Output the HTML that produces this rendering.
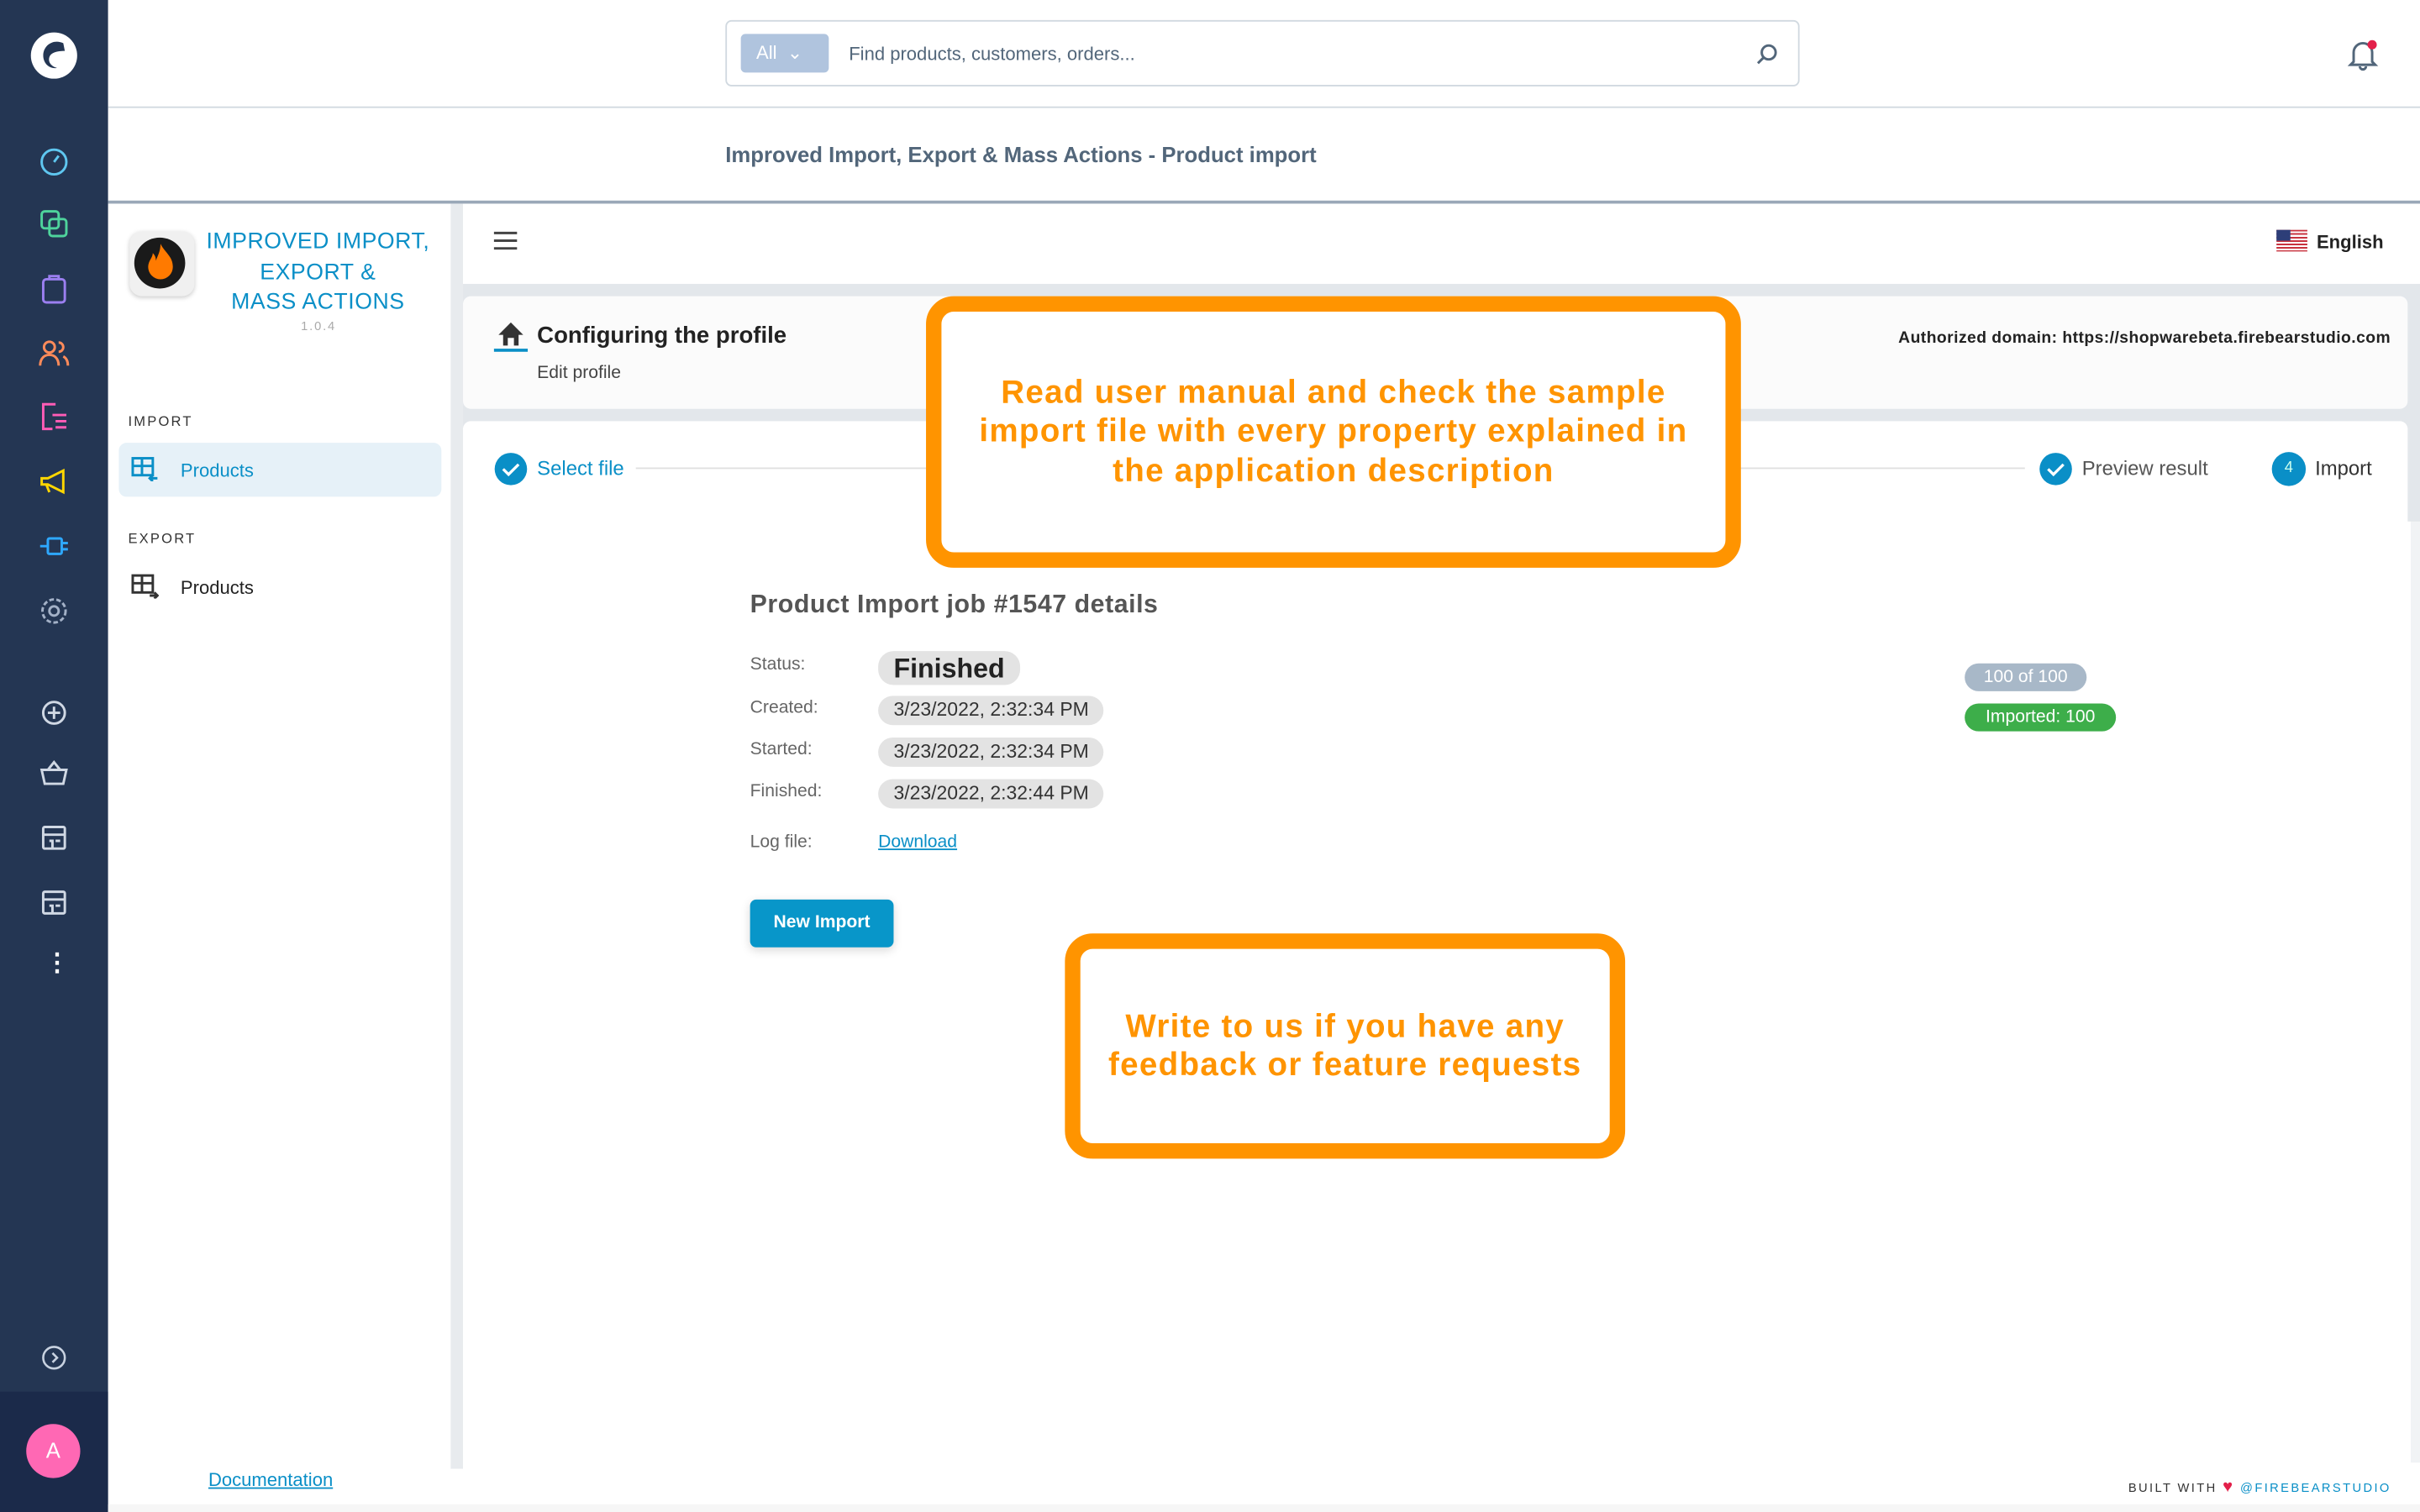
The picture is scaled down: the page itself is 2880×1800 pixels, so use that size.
<!DOCTYPE html>
<html><head><meta charset="utf-8"><style>
html,body{margin:0;padding:0;width:2880px;height:1800px;overflow:hidden;background:#fff;font-family:"Liberation Sans",sans-serif;}
#w{position:absolute;left:0;top:0;width:1568px;height:980px;transform:scale(1.836735);transform-origin:0 0;background:#fff;}
.a{position:absolute}
.side{left:0;top:0;width:70px;height:980px;background:#243653}
.sb{left:0;top:902px;width:70px;height:78px;background:#1b2a4a}
.ic{position:absolute;left:24px;width:22px;height:22px}
.t{position:absolute;white-space:nowrap}
.pill{position:absolute;background:#e3e3e3;border-radius:10px;height:19px;font-size:12.5px;color:#333;line-height:19px;padding:0 10px;}
.lbl{position:absolute;font-size:11.5px;color:#666}
.ob{position:absolute;border:10px solid #ff9400;border-radius:18px;background:#fff;display:flex;align-items:center;justify-content:center;text-align:center;color:#ff9400;font-weight:bold;font-size:21px;line-height:25.5px;box-sizing:border-box;letter-spacing:0.7px}
</style></head><body><div id="w">
<div class="a side"></div><div class="a sb"></div>
<svg class="a" style="left:19px;top:20px" width="32" height="32" viewBox="0 0 32 32"><circle cx="16" cy="16" r="15" fill="#fff"/><path d="M22 8c-6-3-13 1-13 8 0 5 4 9 9 8-4-1-6-4-5-7 1-3 5-4 10-4z" fill="#243653"/></svg>
<svg class="ic" style="top:93px" viewBox="0 0 22 22" fill="none" stroke="#5fc7f0" stroke-width="1.6"><circle cx="11" cy="12" r="8"/><path d="M11 12l3-4"/></svg>
<svg class="ic" style="top:134px" viewBox="0 0 22 22" fill="none" stroke="#4ed39c" stroke-width="1.6"><rect x="3" y="3" width="11" height="11" rx="2"/><rect x="8" y="8" width="11" height="11" rx="2"/></svg>
<svg class="ic" style="top:176px" viewBox="0 0 22 22" fill="none" stroke="#9b7ff0" stroke-width="1.6"><rect x="4" y="5" width="14" height="15" rx="2"/><path d="M8 5V3h6v2"/></svg>
<svg class="ic" style="top:218px" viewBox="0 0 22 22" fill="none" stroke="#ff8b5a" stroke-width="1.6"><circle cx="8" cy="7" r="3.5"/><path d="M2 19c0-5 3-7 6-7s6 2 6 7M14 4a3 3 0 010 6M17 13c2 1 3 3 3 6"/></svg>
<svg class="ic" style="top:259px" viewBox="0 0 22 22" fill="none" stroke="#ff5cb6" stroke-width="1.6"><path d="M10 19H4V3h8M10 10h9M12 14h7M12 18h7"/></svg>
<svg class="ic" style="top:301px" viewBox="0 0 22 22" fill="none" stroke="#ffd700" stroke-width="1.6"><path d="M3 9h4l10-5v14L7 13H3zM6 13l2 5"/></svg>
<svg class="ic" style="top:343px" viewBox="0 0 22 22" fill="none" stroke="#2ea8ff" stroke-width="1.6"><rect x="7" y="6" width="9" height="10" rx="1"/><path d="M2 11h5M16 9h4M16 13h4"/></svg>
<svg class="ic" style="top:385px" viewBox="0 0 22 22" fill="none" stroke="#a3b1c7" stroke-width="1.6"><circle cx="11" cy="11" r="3"/><circle cx="11" cy="11" r="7.5" stroke-dasharray="3 1.6"/></svg>
<svg class="ic" style="top:451px" viewBox="0 0 22 22" fill="none" stroke="#d0d8e4" stroke-width="1.6"><circle cx="11" cy="11" r="7"/><path d="M11 7v8M7 11h8"/></svg>
<svg class="ic" style="top:490px" viewBox="0 0 22 22" fill="none" stroke="#d0d8e4" stroke-width="1.6"><path d="M3 9h16l-2 9H5zM7 9l4-5 4 5"/></svg>
<svg class="ic" style="top:532px" viewBox="0 0 22 22" fill="none" stroke="#d0d8e4" stroke-width="1.6"><rect x="4" y="4" width="14" height="14" rx="1"/><path d="M4 9h14M8 13h2v5M12 13h3"/></svg>
<svg class="ic" style="top:574px" viewBox="0 0 22 22" fill="none" stroke="#d0d8e4" stroke-width="1.6"><rect x="4" y="4" width="14" height="14" rx="1"/><path d="M4 9h14M8 13h2v5M12 13h3"/></svg>
<div class="t" style="left:29px;top:614px;color:#fff;font-size:16px;font-weight:bold">⋮</div>
<svg class="ic" style="top:869px" viewBox="0 0 22 22" fill="none" stroke="#c8d2e0" stroke-width="1.4"><circle cx="11" cy="11" r="7"/><path d="M10 8l3 3-3 3"/></svg>
<div class="a" style="left:17px;top:923px;width:35px;height:35px;border-radius:50%;background:#ff68b4;color:#fff;font-size:14px;text-align:center;line-height:35px">A</div>

<div class="a" style="left:70px;top:69px;width:1498px;height:1px;background:#d1d9e0"></div>
<div class="a" style="left:470px;top:13px;width:696px;height:43px;border:1px solid #d1d9e0;border-radius:4px;box-sizing:border-box"></div>
<div class="a" style="left:480px;top:22px;width:57px;height:25px;background:#b0c4de;border-radius:3px;color:#fff;font-size:12px;line-height:25px;padding-left:10px;box-sizing:border-box">All &nbsp;⌄</div>
<div class="t" style="left:550px;top:28px;font-size:12px;color:#52667a">Find products, customers, orders...</div>
<svg class="a" style="left:1137px;top:27px" width="16" height="16" viewBox="0 0 16 16" fill="none" stroke="#52667a" stroke-width="1.6"><circle cx="9" cy="7" r="4.5"/><path d="M6 10l-4 4"/></svg>
<svg class="a" style="left:1520px;top:24px" width="22" height="22" viewBox="0 0 22 22" fill="none" stroke="#52667a" stroke-width="1.6"><path d="M5 16V10a6 6 0 0112 0v6l2 2H3zM9 19a2 2 0 004 0"/><circle cx="17" cy="5" r="3" fill="#e3204a" stroke="none"/></svg>
<div class="t" style="left:470px;top:92px;font-size:14px;font-weight:bold;color:#52667a">Improved Import, Export &amp; Mass Actions - Product import</div>
<div class="a" style="left:70px;top:130px;width:1498px;height:2px;background:#9aa8b8"></div>

<div class="a" style="left:292px;top:132px;width:8px;height:820px;background:#e8ebee"></div>
<div class="a" style="left:84px;top:150px;width:42px;height:42px;border-radius:8px;background:#f0f0f0;box-shadow:0 1px 3px #ccc"></div>
<div class="a" style="left:87px;top:154px;width:33px;height:33px;border-radius:50%;background:#1a1a1a"></div>
<svg class="a" style="left:93px;top:156px" width="22" height="30" viewBox="0 0 22 30"><path d="M11 2c3 6 8 8 8 15a8 8 0 01-16 0c0-4 3-6 3-9 2 2 2 4 2 5 1-3 3-6 3-11z" fill="#ff7a00"/></svg>
<div class="t" style="left:128px;top:148px;width:156px;text-align:center;color:#0a8fc7;font-size:14.5px;line-height:19.5px;white-space:normal;letter-spacing:0.3px">IMPROVED IMPORT, EXPORT &amp;<br>MASS ACTIONS</div>
<div class="t" style="left:195px;top:207px;font-size:8px;color:#aaa;letter-spacing:1px">1.0.4</div>
<div class="t" style="left:83px;top:268px;font-size:9px;color:#333;letter-spacing:1.2px">IMPORT</div>
<div class="a" style="left:77px;top:287px;width:209px;height:35px;background:#e6f1f8;border-radius:5px"></div>
<svg class="a" style="left:85px;top:296px" width="18" height="16" viewBox="0 0 18 16" fill="none" stroke="#0a8fc7" stroke-width="1.6"><rect x="1" y="1" width="13" height="11"/><path d="M1 6h13M7 1v11M12 14h5M14 12l-2 2 2 2"/></svg>
<div class="t" style="left:117px;top:298px;font-size:12px;color:#0a8fc7">Products</div>
<div class="t" style="left:83px;top:344px;font-size:9px;color:#333;letter-spacing:1.2px">EXPORT</div>
<svg class="a" style="left:85px;top:372px" width="18" height="16" viewBox="0 0 18 16" fill="none" stroke="#333" stroke-width="1.6"><rect x="1" y="1" width="13" height="11"/><path d="M1 6h13M7 1v11M12 14h5M15 12l2 2-2 2"/></svg>
<div class="t" style="left:117px;top:374px;font-size:12px;color:#222">Products</div>
<div class="t" style="left:135px;top:952px;font-size:12px;color:#0a8fc7;text-decoration:underline">Documentation</div>

<svg class="a" style="left:320px;top:150px" width="16" height="12" viewBox="0 0 16 12" stroke="#444" stroke-width="1.6"><path d="M0 1h15M0 6h15M0 11h15"/></svg>
<div class="a" style="left:1475px;top:149px;width:20px;height:14px;background:repeating-linear-gradient(#c8333f 0 1.1px,#fff 1.1px 2.2px)"></div>
<div class="a" style="left:1475px;top:149px;width:9px;height:7px;background:#2d3e78"></div>
<div class="t" style="left:1501px;top:150px;font-size:12px;font-weight:bold;color:#222">English</div>
<div class="a" style="left:300px;top:184px;width:1268px;height:160px;background:#e3e7eb"></div>
<div class="a" style="left:300px;top:192px;width:1260px;height:73px;background:#fbfbfb;border-radius:5px"></div>
<div class="a" style="left:300px;top:273px;width:1260px;height:67px;background:#fff;border-radius:5px 5px 0 0"></div>
<div class="a" style="left:300px;top:338px;width:1262px;height:610px;background:#fff"></div>
<div class="a" style="left:1562px;top:338px;width:6px;height:610px;background:#f1f3f5"></div>
<svg class="a" style="left:320px;top:207px" width="22" height="22" viewBox="0 0 22 22"><path d="M3 10l8-8 8 8h-3v7h-3v-5h-4v5H6v-7z" fill="#333"/><rect x="0" y="19" width="22" height="2" fill="#0a8fc7"/></svg>
<div class="t" style="left:348px;top:209px;font-size:15px;font-weight:bold;color:#222">Configuring the profile</div>
<div class="t" style="left:348px;top:236px;font-size:11.5px;color:#444">Edit profile</div>
<div class="t" style="left:1230px;top:213px;font-size:10.5px;font-weight:bold;color:#222;letter-spacing:0.25px">Authorized domain: https://shopwarebeta.firebearstudio.com</div>
<svg class="a" style="left:320px;top:293px" width="22" height="22" viewBox="0 0 22 22"><circle cx="11" cy="11" r="10.5" fill="#0a8fc7"/><path d="M6 11l3.5 3.5L16 8" stroke="#fff" stroke-width="1.8" fill="none"/></svg>
<div class="t" style="left:348px;top:296px;font-size:13px;color:#0a8fc7">Select file</div>
<div class="a" style="left:412px;top:303px;width:900px;height:1px;background:#e0e0e0"></div>
<svg class="a" style="left:1321px;top:293px" width="22" height="22" viewBox="0 0 22 22"><circle cx="11" cy="11" r="10.5" fill="#0a8fc7"/><path d="M6 11l3.5 3.5L16 8" stroke="#fff" stroke-width="1.8" fill="none"/></svg>
<div class="t" style="left:1349px;top:296px;font-size:13px;color:#555">Preview result</div>
<div class="a" style="left:1472px;top:293px;width:22px;height:22px;border-radius:50%;background:#0a8fc7;color:#cfe;font-size:10px;text-align:center;line-height:22px">4</div>
<div class="t" style="left:1500px;top:296px;font-size:13px;color:#333">Import</div>

<div class="t" style="left:486px;top:383px;font-size:16.5px;font-weight:bold;color:#555;letter-spacing:0.3px">Product Import job #1547 details</div>
<div class="lbl" style="left:486px;top:425px">Status:</div>
<div class="pill" style="left:569px;top:422px;height:22px;line-height:22px;font-size:17.5px;font-weight:bold;color:#222">Finished</div>
<div class="lbl" style="left:486px;top:453px">Created:</div>
<div class="pill" style="left:569px;top:451px">3/23/2022, 2:32:34 PM</div>
<div class="lbl" style="left:486px;top:480px">Started:</div>
<div class="pill" style="left:569px;top:478px">3/23/2022, 2:32:34 PM</div>
<div class="lbl" style="left:486px;top:507px">Finished:</div>
<div class="pill" style="left:569px;top:505px">3/23/2022, 2:32:44 PM</div>
<div class="lbl" style="left:486px;top:540px">Log file:</div>
<div class="t" style="left:569px;top:540px;font-size:11.5px;color:#0a8fc7;text-decoration:underline">Download</div>
<div class="a" style="left:486px;top:583px;width:93px;height:31px;border-radius:4px;background:#0896c9;color:#fff;font-size:11.5px;font-weight:bold;text-align:center;line-height:31px;box-shadow:0 2px 6px rgba(0,0,0,.15)">New Import</div>
<div class="a" style="left:1273px;top:430px;width:79px;height:18px;border-radius:9px;background:#a8b8c8;color:#fff;font-size:11.5px;text-align:center;line-height:18px">100 of 100</div>
<div class="a" style="left:1273px;top:456px;width:98px;height:18px;border-radius:9px;background:#3dae4a;color:#fff;font-size:11.5px;text-align:center;line-height:18px">Imported: 100</div>

<div class="ob" style="left:600px;top:192px;width:528px;height:176px;padding:0 14px">Read user manual and check the sample import file with every property explained in the application description</div>
<div class="ob" style="left:690px;top:605px;width:363px;height:146px;padding:0 6px">Write to us if you have any feedback or feature requests</div>

<div class="t" style="left:1379px;top:958px;font-size:8px;color:#333;letter-spacing:1.3px">BUILT WITH <span style="color:#e3204a;font-size:11px">♥</span> <span style="color:#0a8fc7">@FIREBEARSTUDIO</span></div>
<div class="a" style="left:70px;top:975px;width:1498px;height:5px;background:#f6f6f6"></div>
</div></body></html>
